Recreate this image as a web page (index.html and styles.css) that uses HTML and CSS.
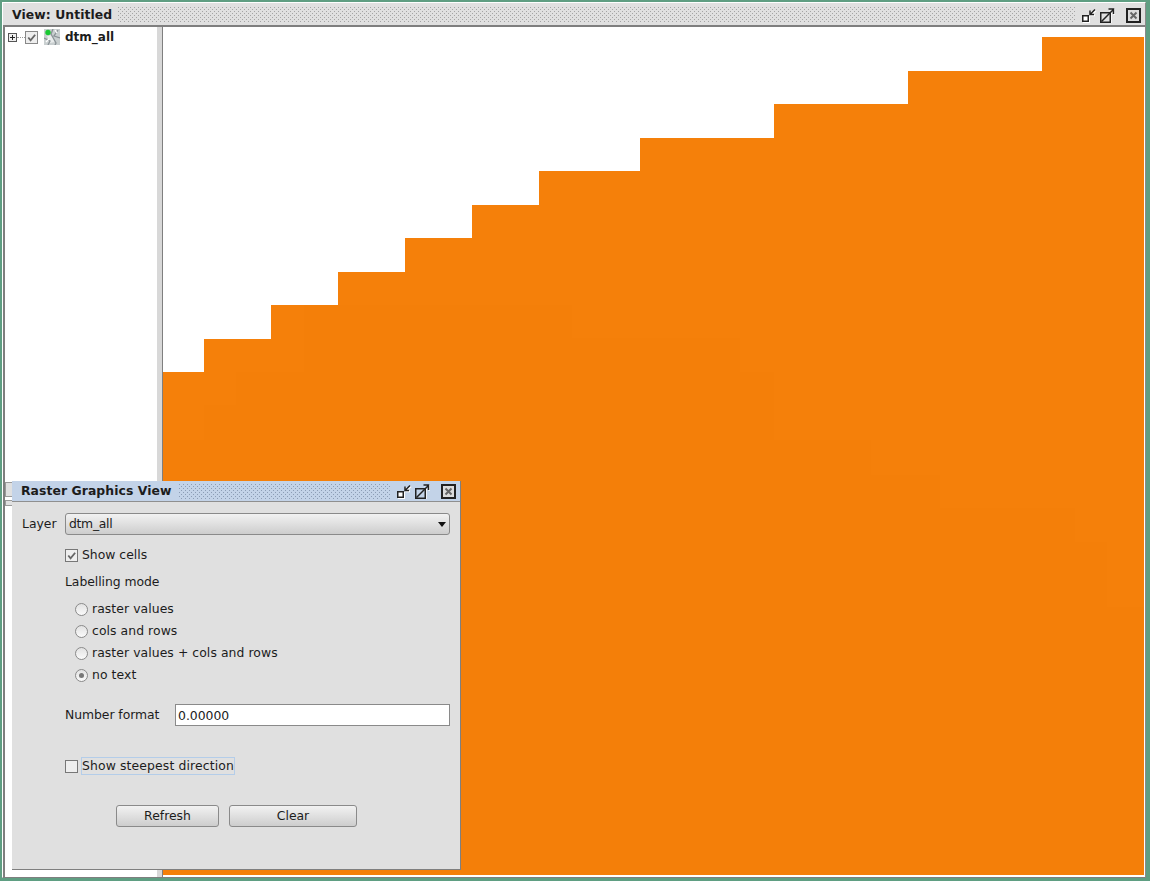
FILE: index.html
```html
<!DOCTYPE html>
<html lang="en">
<head>
<meta charset="utf-8">
<title>View: Untitled</title>
<link rel="stylesheet" href="styles.css">
</head>
<body>
<div class="window">
  <header class="titlebar">
    <span class="title">View: Untitled</span>
    <span class="grip"></span>
    <span class="tools">
      <svg class="icon" viewBox="0 0 15 15"><use href="#ic-float"/></svg>
      <svg class="icon" viewBox="0 0 15 15"><use href="#ic-max"/></svg>
      <svg class="icon close" viewBox="0 0 15 15"><use href="#ic-close"/></svg>
    </span>
  </header>
  <div class="body">
    <aside class="tree">
      <div class="tree-row">
        <span class="expander"></span>
        <span class="dots"></span>
        <span class="tree-check"><svg viewBox="0 0 12 12"><path d="M2.5 6 L5 9 L10 3" fill="none" stroke="#666" stroke-width="2"/></svg></span>
        <svg class="layer-icon" viewBox="0 0 16 16">
          <rect x="0" y="0" width="16" height="16" fill="#c9cfd0"/>
          <path d="M3 7 L8 6 L11 13 L6 14 Z" fill="#e9ecec"/>
          <path d="M9 0 L7 5 L12 14 L11 16 M14 1 L10 7 L16 9 M0 9 L6 12 L4 16" fill="none" stroke="#8a9296" stroke-width="1.3"/>
          <path d="M11 1 L13 4 M2 13 L5 10" fill="none" stroke="#fff" stroke-width="1.3"/>
          <circle cx="4" cy="3.5" r="2.7" fill="#19c832"/>
        </svg>
        <span class="layer-name">dtm_all</span>
      </div>
    </aside>
    <div class="splitter"></div>
    <main class="canvas">
      <svg class="raster" viewBox="0 0 981 848" preserveAspectRatio="none">
        <polygon fill="#f5800a" points="0,345 41,345 41,312 108,312 108,278 175,278 175,245 242,245 242,211 309,211 309,178 376,178 376,144 477,144 477,111 611,111 611,77 745,77 745,44 879,44 879,10 981,10 981,848 0,848"/>
        <polygon fill="#f47f09" points="73,345 141,345 141,278 409,278 409,311 577,311 577,345 611,345 611,413 708,413 708,448 777,448 777,481 912,481 912,515 944,515 944,580 981,580 981,848 0,848 0,413 41,413 41,378 73,378"/>
      </svg>
    </main>
  </div>
</div>

<span class="handle upper"></span>
<span class="handle lower"></span>

<section class="dock">
  <header class="dock-title">
    <span class="title">Raster Graphics View</span>
    <span class="grip"></span>
    <span class="tools">
      <svg class="icon" viewBox="0 0 15 15"><use href="#ic-float"/></svg>
      <svg class="icon" viewBox="0 0 15 15"><use href="#ic-max-blue"/></svg>
      <svg class="icon close" viewBox="0 0 15 15"><use href="#ic-close"/></svg>
    </span>
  </header>
  <div class="form">
    <div class="layer-row">
      <span class="label">Layer</span>
      <div class="combo"><span class="combo-text">dtm_all</span><span class="arrow"></span></div>
    </div>
    <label class="check-row cells"><span class="check"><svg viewBox="0 0 12 12"><path d="M2.5 6 L5 9 L10 3" fill="none" stroke="#666" stroke-width="2"/></svg></span><span>Show cells</span></label>
    <div class="group-title">Labelling mode</div>
    <div class="radios">
      <div class="radio-row"><span class="radio"></span><span>raster values</span></div>
      <div class="radio-row"><span class="radio"></span><span>cols and rows</span></div>
      <div class="radio-row"><span class="radio"></span><span>raster values + cols and rows</span></div>
      <div class="radio-row"><span class="radio on"></span><span>no text</span></div>
    </div>
    <div class="format-row">
      <span>Number format</span>
      <div class="input">0.00000</div>
    </div>
    <label class="check-row steep"><span class="check"></span><span class="focused">Show steepest direction</span></label>
    <div class="buttons">
      <div class="btn refresh">Refresh</div>
      <div class="btn clear">Clear</div>
    </div>
  </div>
</section>

<svg class="defs" width="0" height="0">
  <defs>
    <g id="float-shape">
      <rect x="0.75" y="7.75" width="5.5" height="5.5"/>
      <path d="M13 1.5 L8 6.5 M8 2.5 V6.5 H12"/>
    </g>
    <g id="max-shape">
      <rect x="0.75" y="4.75" width="9.5" height="9.5"/>
      <path d="M1.5 13.5 L13.2 1.8 M8.5 1 H13.5 V6"/>
    </g>
    <g id="ic-float" fill="#fff">
      <use href="#float-shape" stroke="#fff" stroke-width="1.5" transform="translate(1 1)"/>
      <use href="#float-shape" stroke="#222" stroke-width="1.5"/>
    </g>
    <g id="ic-max" fill="#e0e0e0">
      <use href="#max-shape" stroke="#fff" stroke-width="1.5" transform="translate(.7 .7)"/>
      <use href="#max-shape" stroke="#222" stroke-width="1.5"/>
    </g>
    <g id="ic-max-blue" fill="#c3d3e8">
      <use href="#max-shape" stroke="#fff" stroke-width="1.5" transform="translate(.7 .7)"/>
      <use href="#max-shape" stroke="#222" stroke-width="1.5"/>
    </g>
    <g id="ic-close">
      <rect x="1" y="1" width="13" height="13" fill="#dcdcdc" stroke="#222" stroke-width="2"/>
      <path d="M4.5 4.5 L10.5 10.5 M10.5 4.5 L4.5 10.5" stroke="#666" stroke-width="2" fill="none"/>
    </g>
  </defs>
</svg>
</body>
</html>
```
FILE: styles.css
```css
* { box-sizing: border-box; }
html, body { margin: 0; height: 100%; }
body {
  width: 1150px;
  height: 881px;
  overflow: hidden;
  position: relative;
  background: #5f9e82;
  padding: 2px 4px 3px 2px;
  font: 12.4px/16px "DejaVu Sans", sans-serif;
  color: #1c1c1c;
}
.window {
  height: 876px;
  display: flex;
  flex-direction: column;
  background: #e0e0e0;
  border-top: 1px solid #fff;
  border-left: 1px solid #fff;
  border-right: 1px solid #8a8a8a;
  border-bottom: 1px solid #7f7f7f;
}
.titlebar {
  height: 24px;
  flex: none;
  display: flex;
  align-items: center;
  padding: 2px 0 0 9px;
  border-bottom: 2px solid #7f7f7f;
  background: #e0e0e0;
}
.title { font-weight: bold; white-space: nowrap; letter-spacing: .07px; }
.grip {
  flex: 1;
  align-self: stretch;
  margin: 2px 0 3px 6px;
  background-color: #e0e0e0;
  background-image:
    radial-gradient(circle at .5px .5px, #a4a4a4 .7px, transparent .75px),
    radial-gradient(circle at .5px .5px, #a4a4a4 .7px, transparent .75px);
  background-size: 4px 4px;
  background-position: 0 0, 2px 2px;
}
.tools { display: flex; align-items: center; gap: 3px; padding: 0 4px 0 7px; }
.icon { width: 15px; height: 15px; display: block; }
.icon.close { margin-left: 8px; }
.body { flex: 1; display: flex; min-height: 0; border-left: 2px solid #7f7f7f; }
.tree { width: 152px; flex: none; background: #fff; padding: 1px 0 0 3px; }
.tree-row { display: flex; align-items: center; height: 18px; }
.expander {
  width: 9px; height: 9px; border: 1px solid #555; background:
    linear-gradient(#222,#222) center/5px 1px no-repeat,
    linear-gradient(#222,#222) center/1px 5px no-repeat, #eee;
}
.dots { width: 8px; border-top: 1px dotted #999; }
.tree-check {
  width: 13px; height: 13px; border: 1px solid #888; background: #eee; display: block;
}
.tree-check svg, .check svg { display: block; width: 100%; height: 100%; }
.layer-icon { width: 16px; height: 16px; margin-left: 6px; flex: none; }
.layer-name { font-weight: bold; margin-left: 5px; font-size: 12px; }
.splitter {
  width: 6px; flex: none; background: #d8d8d8; border-right: 1px solid #7f7f7f;
}
.canvas { flex: 1; background: #fff; padding: 0 1px 2px 0; min-width: 0; }
.raster { display: block; width: 100%; height: 100%; }
.handle { position: absolute; left: 5px; width: 7px; background: #e0e0e0; border: 1px solid #9a9a9a; border-right: 0; }
.handle.upper { top: 482px; height: 15px; }
.handle.lower { top: 500px; height: 6px; }
.dock {
  position: absolute;
  left: 12px; top: 481px;
  width: 449px; height: 389px;
  background: #e0e0e0;
  border-right: 1px solid #7f7f7f;
  border-bottom: 1px solid #7f7f7f;
  display: flex;
  flex-direction: column;
}
.dock-title {
  height: 21px;
  flex: none;
  display: flex;
  align-items: center;
  padding-left: 9px;
  background: #c3d3e8;
  border-bottom: 1px solid #8f8f8f;
}
.dock-title .grip {
  margin: 3px 0 1px 7px;
  background-color: #c3d3e8;
  background-image:
    radial-gradient(circle at .5px .5px, #8c9db5 .7px, transparent .75px),
    radial-gradient(circle at .5px .5px, #8c9db5 .7px, transparent .75px);
}
.dock-title .tools { padding-left: 6px; }
.form { flex: 1; display: flex; flex-direction: column; padding: 11px 10px 0 10px; }
.layer-row { display: flex; align-items: center; gap: 10px; height: 22px; }
.label { width: 33px; }
.combo {
  flex: 1; height: 22px; display: flex; align-items: center; justify-content: space-between;
  padding: 0 3px; border: 1px solid #8a8a8a; border-radius: 3px;
  background: linear-gradient(#f2f2f2, #cdcdcd);
}
.combo-text { letter-spacing: -.3px; }
.arrow { width: 0; height: 0; border: 4px solid transparent; border-top: 5px solid #111; border-bottom: 0; }
.check-row { display: flex; align-items: center; gap: 4px; margin-left: 43px; }
.cells { margin-top: 12px; }
.check {
  width: 13px; height: 13px; border: 1px solid #777; background: #eee; display: block; flex: none;
}
.group-title { margin: 11px 0 0 43px; letter-spacing: -.05px; }
.radios { margin: 11px 0 0 53px; display: flex; flex-direction: column; gap: 6px; }
.radio-row { display: flex; align-items: center; gap: 4px; letter-spacing: .07px; }
.radio {
  width: 13px; height: 13px; border: 1px solid #8a8a8a; border-radius: 50%;
  background: linear-gradient(#e2e2e2, #fafafa); flex: none; position: relative;
}
.radio.on::after {
  content: ""; position: absolute; left: 3px; top: 3px; width: 5px; height: 5px; border-radius: 50%; background: #777;
}
.format-row { display: flex; align-items: center; margin: 21px 0 0 43px; }
.format-row > span { width: 110px; flex: none; letter-spacing: -.05px; }
.input {
  flex: 1; height: 22px; padding: 2px 2px; background: #fff; border: 1px solid #8a8a8a; line-height: 18px;
}
.steep { margin-top: 32px; }
.focused { outline: 1px solid #b4cde9; letter-spacing: .13px; }
.buttons { display: flex; margin: 31px 0 0 94px; gap: 10px; }
.btn {
  height: 22px; border: 1px solid #8a8a8a; border-radius: 3px; text-align: center; line-height: 20px;
  background: linear-gradient(#f2f2f2, #cdcdcd);
}
.refresh { width: 103px; }
.clear { width: 128px; }
.defs { position: absolute; }
```
